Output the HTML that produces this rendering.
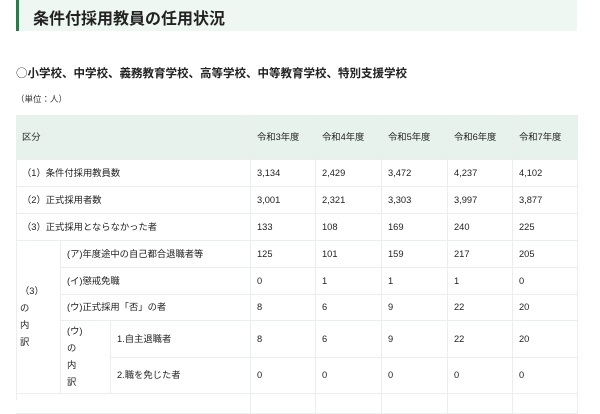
<!DOCTYPE html>
<html><head><meta charset="utf-8"><style>
*{margin:0;padding:0;box-sizing:border-box}
body{width:600px;height:400px;overflow:hidden;background:#fff;font-family:"Liberation Sans","Noto Sans CJK JP",sans-serif;color:#222;position:relative}
.a{position:absolute}
.title{left:16px;top:0;width:561px;height:31px;background:#eff7f2;border-left:3px solid #2f7a4d}
.title span{position:absolute;left:14px;top:5px;font-size:16px;font-weight:bold;color:#222;white-space:nowrap}
.sub{left:16px;top:65px;font-size:11.5px;font-weight:bold;white-space:nowrap}
.sub b{font-family:"Noto Sans CJK JP",sans-serif;font-weight:normal}
.unit{left:16px;top:93px;font-size:8.5px;color:#333;white-space:nowrap}
.c{position:absolute;border-right:1.5px solid #eaeeec;border-bottom:1.5px solid #eaeeec;font-size:9.3px;color:#222;display:flex;align-items:center;padding-left:6px;white-space:nowrap;line-height:17px}
.h{background:#e8f2ed}
</style></head><body>
<div class="a title"><span>条件付採用教員の任用状況</span></div>
<div class="a sub"><b>○</b>小学校、中学校、義務教育学校、高等学校、中等教育学校、特別支援学校</div>
<div class="a unit">（単位：人）</div>
<div class="a" style="left:16px;top:115px;width:562px;height:285px;border-left:1.5px solid #eaeeec;border-top:1.5px solid #eaeeec"></div>

<div class="c h" style="left:16px;top:115px;width:235px;height:45px">区分</div>
<div class="c h" style="left:251px;top:115px;width:65px;height:45px">令和3年度</div>
<div class="c h" style="left:316px;top:115px;width:66px;height:45px">令和4年度</div>
<div class="c h" style="left:382px;top:115px;width:66px;height:45px">令和5年度</div>
<div class="c h" style="left:448px;top:115px;width:65px;height:45px">令和6年度</div>
<div class="c h" style="left:513px;top:115px;width:65px;height:45px">令和7年度</div>

<div class="c" style="left:16px;top:160px;width:235px;height:27px">（1）条件付採用教員数</div>
<div class="c" style="left:251px;top:160px;width:65px;height:27px">3,134</div>
<div class="c" style="left:316px;top:160px;width:66px;height:27px">2,429</div>
<div class="c" style="left:382px;top:160px;width:66px;height:27px">3,472</div>
<div class="c" style="left:448px;top:160px;width:65px;height:27px">4,237</div>
<div class="c" style="left:513px;top:160px;width:65px;height:27px">4,102</div>

<div class="c" style="left:16px;top:187px;width:235px;height:27px">（2）正式採用者数</div>
<div class="c" style="left:251px;top:187px;width:65px;height:27px">3,001</div>
<div class="c" style="left:316px;top:187px;width:66px;height:27px">2,321</div>
<div class="c" style="left:382px;top:187px;width:66px;height:27px">3,303</div>
<div class="c" style="left:448px;top:187px;width:65px;height:27px">3,997</div>
<div class="c" style="left:513px;top:187px;width:65px;height:27px">3,877</div>

<div class="c" style="left:16px;top:214px;width:235px;height:27px">（3）正式採用とならなかった者</div>
<div class="c" style="left:251px;top:214px;width:65px;height:27px">133</div>
<div class="c" style="left:316px;top:214px;width:66px;height:27px">108</div>
<div class="c" style="left:382px;top:214px;width:66px;height:27px">169</div>
<div class="c" style="left:448px;top:214px;width:65px;height:27px">240</div>
<div class="c" style="left:513px;top:214px;width:65px;height:27px">225</div>

<div class="c" style="left:16px;top:241px;width:45px;height:153px;white-space:normal;padding-left:4px"><div>（3）<br>の<br>内<br>訳</div></div>

<div class="c" style="left:61px;top:241px;width:190px;height:27px">(ア)年度途中の自己都合退職者等</div>
<div class="c" style="left:251px;top:241px;width:65px;height:27px">125</div>
<div class="c" style="left:316px;top:241px;width:66px;height:27px">101</div>
<div class="c" style="left:382px;top:241px;width:66px;height:27px">159</div>
<div class="c" style="left:448px;top:241px;width:65px;height:27px">217</div>
<div class="c" style="left:513px;top:241px;width:65px;height:27px">205</div>

<div class="c" style="left:61px;top:268px;width:190px;height:27px">(イ)懲戒免職</div>
<div class="c" style="left:251px;top:268px;width:65px;height:27px">0</div>
<div class="c" style="left:316px;top:268px;width:66px;height:27px">1</div>
<div class="c" style="left:382px;top:268px;width:66px;height:27px">1</div>
<div class="c" style="left:448px;top:268px;width:65px;height:27px">1</div>
<div class="c" style="left:513px;top:268px;width:65px;height:27px">0</div>

<div class="c" style="left:61px;top:295px;width:190px;height:26px">(ウ)正式採用「否」の者</div>
<div class="c" style="left:251px;top:295px;width:65px;height:26px">8</div>
<div class="c" style="left:316px;top:295px;width:66px;height:26px">6</div>
<div class="c" style="left:382px;top:295px;width:66px;height:26px">9</div>
<div class="c" style="left:448px;top:295px;width:65px;height:26px">22</div>
<div class="c" style="left:513px;top:295px;width:65px;height:26px">20</div>

<div class="c" style="left:61px;top:321px;width:50px;height:73px;white-space:normal"><div>(ウ)<br>の<br>内<br>訳</div></div>

<div class="c" style="left:111px;top:321px;width:140px;height:37px">1.自主退職者</div>
<div class="c" style="left:251px;top:321px;width:65px;height:37px">8</div>
<div class="c" style="left:316px;top:321px;width:66px;height:37px">6</div>
<div class="c" style="left:382px;top:321px;width:66px;height:37px">9</div>
<div class="c" style="left:448px;top:321px;width:65px;height:37px">22</div>
<div class="c" style="left:513px;top:321px;width:65px;height:37px">20</div>

<div class="c" style="left:111px;top:358px;width:140px;height:36px">2.職を免じた者</div>
<div class="c" style="left:251px;top:358px;width:65px;height:36px">0</div>
<div class="c" style="left:316px;top:358px;width:66px;height:36px">0</div>
<div class="c" style="left:382px;top:358px;width:66px;height:36px">0</div>
<div class="c" style="left:448px;top:358px;width:65px;height:36px">0</div>
<div class="c" style="left:513px;top:358px;width:65px;height:36px">0</div>

<div class="c" style="left:16px;top:394px;width:235px;height:20px"></div>
<div class="c" style="left:251px;top:394px;width:65px;height:20px"></div>
<div class="c" style="left:316px;top:394px;width:66px;height:20px"></div>
<div class="c" style="left:382px;top:394px;width:66px;height:20px"></div>
<div class="c" style="left:448px;top:394px;width:65px;height:20px"></div>
<div class="c" style="left:513px;top:394px;width:65px;height:20px"></div>
</body></html>
